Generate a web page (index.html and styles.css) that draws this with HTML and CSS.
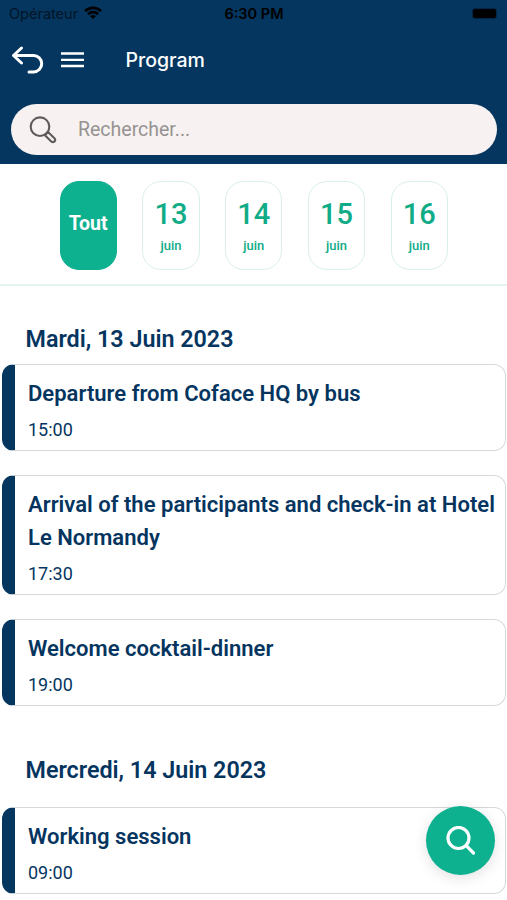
FILE: index.html
```html
<!DOCTYPE html>
<html lang="fr">
<head>
<meta charset="utf-8">
<title>Program</title>
<link rel="stylesheet" href="styles.css">
</head>
<body>
<header class="header">
  <div class="status">
    <div class="carrier"><span>Opérateur</span>
      <svg class="wifi" viewBox="0 0 18 14" width="18" height="14" fill="none" stroke="#000" stroke-width="2.7"><path d="M1 5.1C5.5 .7 12.500 .7 17 5.100M4 8.300C6.800 5.500 11.200 5.500 14 8.300"/><path d="M6.200 10.300Q9 7.900 11.800 10.300L9 13.100Z" fill="#000" stroke="none"/></svg>
    </div>
    <span class="clock">6:30 PM</span>
    <div class="battery-wrap"><span class="battery"></span></div>
  </div>
  <nav class="nav">
    <svg class="back" viewBox="0 0 32 28" width="32" height="28" fill="none" stroke="#fff" stroke-width="3" stroke-linecap="round" stroke-linejoin="round"><path d="M9.500 2 1.500 9.500 9.500 17M2 9.500H21.500A8.200 8.200 0 0 1 21.500 25.900H17"/></svg>
    <svg class="menu" viewBox="0 0 23 16" width="23" height="16" stroke="#fff" stroke-width="2.300"><path d="M0 1.500H23M0 7.800H23M0 14H23"/></svg>
    <h1>Program</h1>
  </nav>
  <div class="search">
    <svg viewBox="0 0 28 28" width="28" height="28" fill="none" stroke="#5f5b5b" stroke-width="2.100" stroke-linejoin="round"><circle cx="11" cy="10.700" r="9.300"/><path d="M15.900 19.200 19 16.100 25.700 22.500A2.300 2.300 0 0 1 22.500 25.700Z"/></svg>
    <span>Rechercher...</span>
  </div>
</header>
<section class="days">
  <div class="day active">Tout</div>
  <div class="day"><b>13</b><span>juin</span></div>
  <div class="day"><b>14</b><span>juin</span></div>
  <div class="day"><b>15</b><span>juin</span></div>
  <div class="day"><b>16</b><span>juin</span></div>
</section>
<main class="agenda">
  <h2>Mardi, 13 Juin 2023</h2>
  <article class="card"><h3>Departure from Coface HQ by bus</h3><time>15:00</time></article>
  <article class="card"><h3>Arrival of the participants and check-in at Hotel Le Normandy</h3><time>17:30</time></article>
  <article class="card"><h3>Welcome cocktail-dinner</h3><time>19:00</time></article>
  <h2 class="later">Mercredi, 14 Juin 2023</h2>
  <article class="card"><h3>Working session</h3><time>09:00</time></article>
</main>
<div class="fab">
  <svg viewBox="0 0 30 30" width="30" height="30" fill="none" stroke="#fff" stroke-width="3.200" stroke-linecap="round"><circle cx="12.500" cy="12" r="10.500"/><path d="M20.200 19.700 27.500 27"/></svg>
</div>
</body>
</html>
```
FILE: styles.css
```css
* { box-sizing: border-box; }
body { margin: 0; height: 900px; overflow: hidden; background: #fff; color: #05355f; font-family: Roboto, sans-serif; }
h1, h2, h3 { margin: 0; }
svg { display: block; flex: none; }
.header { height: 164px; background: #04365f; }
.status { height: 28px; padding: 0 8px 0 9px; display: grid; grid-template-columns: 1fr auto 1fr; align-items: center; color: #000; font: 14.500px/28px Inter, sans-serif; }
.carrier { display: flex; align-items: center; gap: 6px; color: #021426; }
.wifi { margin-top: -2px; }
.clock { font-weight: 600; }
.battery-wrap { display: flex; justify-content: flex-end; }
.battery { width: 25px; height: 11px; margin: -2px 2px 0 0; border: 1px solid #022647; border-radius: 3px; background: #000; }
.nav { height: 64px; padding-left: 12px; display: flex; align-items: center; color: #fff; }
.menu { margin-left: 16.500px; }
.nav h1 { margin-left: 42px; font: 500 19.500px/28px Inter, sans-serif; }
.search { height: 51px; margin: 12px 10px 0 11px; padding-left: 18px; border-radius: 26px; background: #f7f2f1; display: flex; align-items: center; gap: 21px; color: #969292; font-size: 19.500px; }
.days { height: 122px; padding: 16.500px 0 0 59.500px; display: flex; align-items: flex-start; gap: 25.500px; border-bottom: 2px solid #e4f4f1; }
.day { width: 57.300px; height: 89px; border: 1px solid #d9f0eb; border-radius: 19px; display: flex; flex-direction: column; align-items: center; color: #10ab87; }
.day b { margin-top: 14px; font-size: 29px; line-height: 36px; font-weight: 500; }
.day span { margin-top: 5.500px; font-size: 13px; line-height: 18px; font-weight: 500; }
.day.active { background: #0eb18f; border-color: #0eb18f; color: #fff; font-size: 19.500px; line-height: 84px; font-weight: 700; }
.agenda { padding: 37px 1px 0 2px; }
.agenda h2 { height: 30px; padding-left: 23.500px; font-size: 23.300px; line-height: 32px; font-weight: 600; margin-bottom: 11px; }
.agenda h2.later { margin-top: 49px; margin-bottom: 22.500px; line-height: 31px; }
.card { border: 1px solid #d3d9dc; border-left: 13px solid #04365f; border-radius: 12px; padding: 11.500px 4px 6.500px 13px; margin-bottom: 24.500px; }
.card h3 { font-size: 22.040px; line-height: 33px; font-weight: 600; }
.card time { display: block; margin-top: 6.500px; font-size: 18px; line-height: 27px; }
.fab { position: absolute; left: 426px; top: 806px; width: 69px; height: 69px; border-radius: 50%; background: #0eb18f; display: flex; align-items: center; justify-content: center; box-shadow: 0 3px 14px rgba(0,0,0,.12); }
```
